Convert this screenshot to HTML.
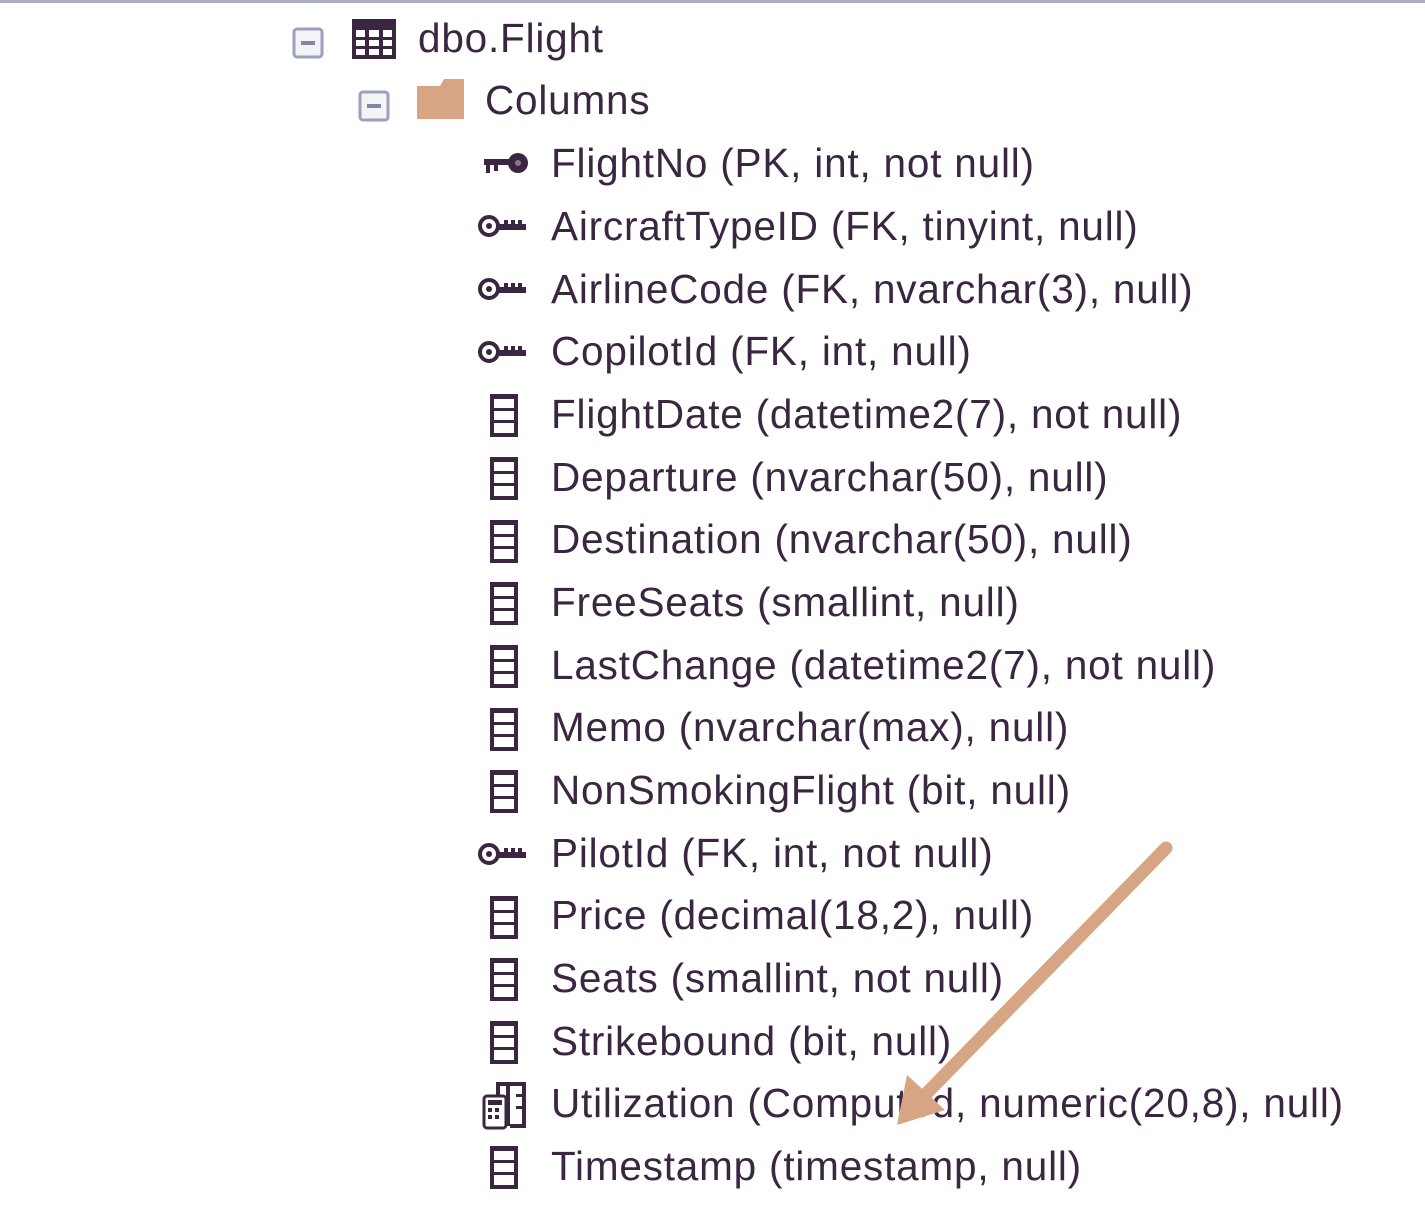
<!DOCTYPE html>
<html><head><style>
html,body{margin:0;padding:0;background:#fff;}
body{width:1425px;height:1209px;position:relative;overflow:hidden;font-family:"Liberation Sans",sans-serif;color:#3b2641;}
.top{position:absolute;left:0;top:0;width:1425px;height:3px;background:#a9aec4;}
.t{position:absolute;font-size:40.5px;letter-spacing:0.8px;line-height:42px;white-space:nowrap;}
.ic{position:absolute;}
</style></head><body>
<div class="top"></div>
<svg class="ic" style="left:292px;top:27px" width="32" height="32"><rect x="2" y="2" width="28" height="28" rx="3" fill="#f4f3f6" stroke="#9aa0bd" stroke-width="3"/><rect x="9" y="14" width="14" height="4" fill="#8088a8"/></svg>
<svg class="ic" style="left:351px;top:18px" width="46" height="42"><rect x="1" y="1" width="44" height="40" fill="#3b2641"/><g fill="#fff"><rect x="5" y="12" width="9" height="7"/><rect x="18" y="12" width="10" height="7"/><rect x="32" y="12" width="9" height="7"/><rect x="5" y="22" width="9" height="6"/><rect x="18" y="22" width="10" height="6"/><rect x="32" y="22" width="9" height="6"/><rect x="5" y="31" width="9" height="6"/><rect x="18" y="31" width="10" height="6"/><rect x="32" y="31" width="9" height="6"/></g></svg>
<div class="t" style="left:418px;top:17px">dbo.Flight</div>
<svg class="ic" style="left:358px;top:90px" width="32" height="32"><rect x="2" y="2" width="28" height="28" rx="3" fill="#f4f3f6" stroke="#9aa0bd" stroke-width="3"/><rect x="9" y="14" width="14" height="4" fill="#8088a8"/></svg>
<svg class="ic" style="left:416px;top:78px" width="50" height="42"><path d="M1 8 H24 L28 1 H48 V41 H1 Z" fill="#d7a583"/></svg>
<div class="t" style="left:485px;top:79px">Columns</div>

<svg class="ic" style="left:482px;top:150px" width="48" height="28"><circle cx="36" cy="13" r="10" fill="#3b2641"/><circle cx="36" cy="13" r="3" fill="#8a7890"/><rect x="2" y="9" width="28" height="6" fill="#3b2641"/><rect x="4" y="13" width="4" height="10" fill="#3b2641"/><rect x="12" y="13" width="4" height="8" fill="#3b2641"/></svg>
<div class="t" style="left:551px;top:142px">FlightNo (PK, int, not null)</div>

<svg width="0" height="0" style="position:absolute"><defs>
<g id="fk"><circle cx="11" cy="13" r="9" fill="none" stroke="#3b2641" stroke-width="4"/><circle cx="11" cy="13" r="3" fill="#3b2641"/><path d="M20 11 H48 V17 H20 Z" fill="#3b2641"/><path d="M26 7 h4 v4 h-4z M33 7 h4 v4 h-4z M40 7 h4 v4 h-4z" fill="#3b2641"/></g>
<g id="col"><rect x="4" y="3" width="24" height="39" fill="none" stroke="#3b2641" stroke-width="4"/><rect x="4" y="15" width="24" height="3" fill="#3b2641"/><rect x="4" y="27" width="24" height="3" fill="#3b2641"/><rect x="4" y="2" width="24" height="4" fill="#3b2641"/></g>
</defs></svg>

<svg class="ic" style="left:478px;top:213px" width="52" height="28"><use href="#fk"/></svg>
<div class="t" style="left:551px;top:205px">AircraftTypeID (FK, tinyint, null)</div>
<svg class="ic" style="left:478px;top:276px" width="52" height="28"><use href="#fk"/></svg>
<div class="t" style="left:551px;top:268px">AirlineCode (FK, nvarchar(3), null)</div>
<svg class="ic" style="left:478px;top:339px" width="52" height="28"><use href="#fk"/></svg>
<div class="t" style="left:551px;top:330px">CopilotId (FK, int, null)</div>

<svg class="ic" style="left:488px;top:393px" width="34" height="46"><use href="#col"/></svg>
<div class="t" style="left:551px;top:393px">FlightDate (datetime2(7), not null)</div>
<svg class="ic" style="left:488px;top:456px" width="34" height="46"><use href="#col"/></svg>
<div class="t" style="left:551px;top:456px">Departure (nvarchar(50), null)</div>
<svg class="ic" style="left:488px;top:519px" width="34" height="46"><use href="#col"/></svg>
<div class="t" style="left:551px;top:518px">Destination (nvarchar(50), null)</div>
<svg class="ic" style="left:488px;top:581px" width="34" height="46"><use href="#col"/></svg>
<div class="t" style="left:551px;top:581px">FreeSeats (smallint, null)</div>
<svg class="ic" style="left:488px;top:644px" width="34" height="46"><use href="#col"/></svg>
<div class="t" style="left:551px;top:644px">LastChange (datetime2(7), not null)</div>
<svg class="ic" style="left:488px;top:707px" width="34" height="46"><use href="#col"/></svg>
<div class="t" style="left:551px;top:706px">Memo (nvarchar(max), null)</div>
<svg class="ic" style="left:488px;top:769px" width="34" height="46"><use href="#col"/></svg>
<div class="t" style="left:551px;top:769px">NonSmokingFlight (bit, null)</div>
<svg class="ic" style="left:478px;top:841px" width="52" height="28"><use href="#fk"/></svg>
<div class="t" style="left:551px;top:832px">PilotId (FK, int, not null)</div>
<svg class="ic" style="left:488px;top:895px" width="34" height="46"><use href="#col"/></svg>
<div class="t" style="left:551px;top:894px">Price (decimal(18,2), null)</div>
<svg class="ic" style="left:488px;top:957px" width="34" height="46"><use href="#col"/></svg>
<div class="t" style="left:551px;top:957px">Seats (smallint, not null)</div>
<svg class="ic" style="left:488px;top:1020px" width="34" height="46"><use href="#col"/></svg>
<div class="t" style="left:551px;top:1020px">Strikebound (bit, null)</div>
<svg class="ic" style="left:480px;top:1080px" width="48" height="50"><rect x="18" y="4" width="10" height="40" fill="none" stroke="#3b2641" stroke-width="4"/><path d="M18 4 H44 V46 H30" fill="none" stroke="#3b2641" stroke-width="4"/><rect x="4" y="16" width="22" height="32" rx="3" fill="#fff" stroke="#3b2641" stroke-width="3"/><g fill="#3b2641"><rect x="8" y="20" width="14" height="5"/><rect x="8" y="28" width="4" height="4"/><rect x="15" y="28" width="4" height="4"/><rect x="8" y="35" width="4" height="4"/><rect x="15" y="35" width="4" height="4"/></g><rect x="36" y="14" width="8" height="3" fill="#3b2641"/><rect x="36" y="26" width="8" height="3" fill="#3b2641"/></svg>
<div class="t" style="left:551px;top:1082px">Utilization (Computed, numeric(20,8), null)</div>
<svg class="ic" style="left:488px;top:1145px" width="34" height="46"><use href="#col"/></svg>
<div class="t" style="left:551px;top:1145px">Timestamp (timestamp, null)</div>

<svg class="ic" style="left:0;top:0" width="1425" height="1209"><line x1="1166" y1="848" x2="925" y2="1095" stroke="#d6a584" stroke-width="13" stroke-linecap="round"/><path d="M897 1125 L907 1075 L945 1110 Z" fill="#d6a584"/></svg>
</body></html>
